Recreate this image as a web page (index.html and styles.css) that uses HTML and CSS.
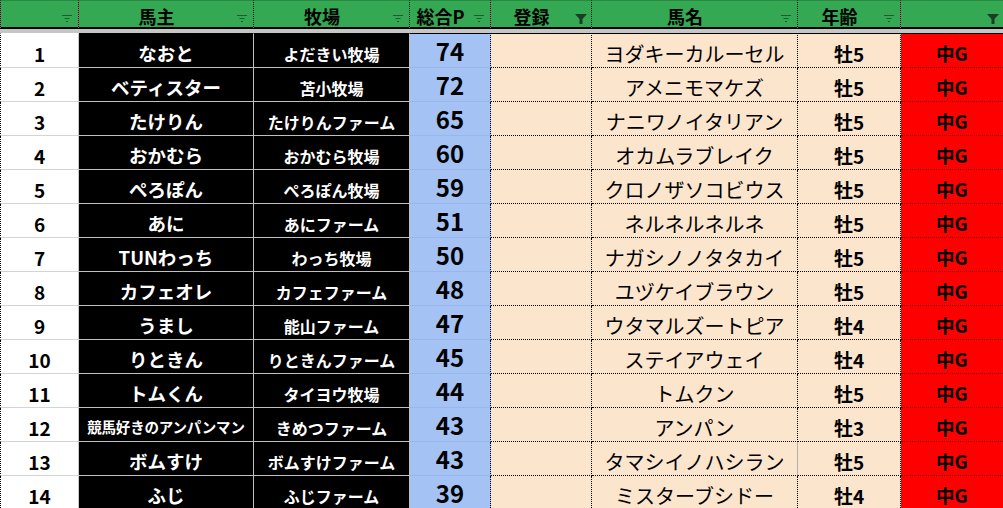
FILE: index.html
```html
<!DOCTYPE html>
<html lang="ja">
<head>
<meta charset="utf-8">
<link rel="stylesheet" href="styles.css">
</head>
<body>
<div class="sheet">
  <div class="h c0"><span class="ht"></span><svg class="fl" viewBox="0 0 10 7"><rect x="0" y="0" width="10" height="1"/><rect x="2.5" y="3" width="5" height="1"/><rect x="4" y="6" width="2" height="1"/></svg></div>
  <div class="h c1"><span class="ht">馬主</span><svg class="fl" viewBox="0 0 10 7"><rect x="0" y="0" width="10" height="1"/><rect x="2.5" y="3" width="5" height="1"/><rect x="4" y="6" width="2" height="1"/></svg></div>
  <div class="h c2"><span class="ht">牧場</span><svg class="fl" viewBox="0 0 10 7"><rect x="0" y="0" width="10" height="1"/><rect x="2.5" y="3" width="5" height="1"/><rect x="4" y="6" width="2" height="1"/></svg></div>
  <div class="h c3"><span class="ht">総合P</span><svg class="fl" viewBox="0 0 10 7"><rect x="0" y="0" width="10" height="1"/><rect x="2.5" y="3" width="5" height="1"/><rect x="4" y="6" width="2" height="1"/></svg></div>
  <div class="h c4"><span class="ht">登録</span><svg class="fn" viewBox="0 0 12 10"><polygon points="0,0 12,0 7.5,5 7.5,10 4.5,10 4.5,5"/></svg></div>
  <div class="h c5"><span class="ht">馬名</span><svg class="fl" viewBox="0 0 10 7"><rect x="0" y="0" width="10" height="1"/><rect x="2.5" y="3" width="5" height="1"/><rect x="4" y="6" width="2" height="1"/></svg></div>
  <div class="h c6"><span class="ht">年齢</span><svg class="fl" viewBox="0 0 10 7"><rect x="0" y="0" width="10" height="1"/><rect x="2.5" y="3" width="5" height="1"/><rect x="4" y="6" width="2" height="1"/></svg></div>
  <div class="h c7"><span class="ht"></span><svg class="fn" viewBox="0 0 12 10"><polygon points="0,0 12,0 7.5,5 7.5,10 4.5,10 4.5,5"/></svg></div>
  <div class="gap"></div>

  <div class="d c0 r1">1</div><div class="d c1 r1">なおと</div><div class="d c2 r1">よだきい牧場</div><div class="d c3 r1">74</div><div class="d c4 r1"></div><div class="d c5 r1">ヨダキーカルーセル</div><div class="d c6 r1">牡5</div><div class="d c7 r1">中G</div>
  <div class="d c0">2</div><div class="d c1">ベティスター</div><div class="d c2">苫小牧場</div><div class="d c3">72</div><div class="d c4"></div><div class="d c5">アメニモマケズ</div><div class="d c6">牡5</div><div class="d c7">中G</div>
  <div class="d c0">3</div><div class="d c1">たけりん</div><div class="d c2">たけりんファーム</div><div class="d c3">65</div><div class="d c4"></div><div class="d c5">ナニワノイタリアン</div><div class="d c6">牡5</div><div class="d c7">中G</div>
  <div class="d c0">4</div><div class="d c1">おかむら</div><div class="d c2">おかむら牧場</div><div class="d c3">60</div><div class="d c4"></div><div class="d c5">オカムラブレイク</div><div class="d c6">牡5</div><div class="d c7">中G</div>
  <div class="d c0">5</div><div class="d c1">ぺろぽん</div><div class="d c2">ぺろぽん牧場</div><div class="d c3">59</div><div class="d c4"></div><div class="d c5">クロノザソコビウス</div><div class="d c6">牡5</div><div class="d c7">中G</div>
  <div class="d c0">6</div><div class="d c1">あに</div><div class="d c2">あにファーム</div><div class="d c3">51</div><div class="d c4"></div><div class="d c5">ネルネルネルネ</div><div class="d c6">牡5</div><div class="d c7">中G</div>
  <div class="d c0">7</div><div class="d c1">TUNわっち</div><div class="d c2">わっち牧場</div><div class="d c3">50</div><div class="d c4"></div><div class="d c5">ナガシノノタタカイ</div><div class="d c6">牡5</div><div class="d c7">中G</div>
  <div class="d c0">8</div><div class="d c1">カフェオレ</div><div class="d c2">カフェファーム</div><div class="d c3">48</div><div class="d c4"></div><div class="d c5">ユヅケイブラウン</div><div class="d c6">牡5</div><div class="d c7">中G</div>
  <div class="d c0">9</div><div class="d c1">うまし</div><div class="d c2">能山ファーム</div><div class="d c3">47</div><div class="d c4"></div><div class="d c5">ウタマルズートピア</div><div class="d c6">牡4</div><div class="d c7">中G</div>
  <div class="d c0">10</div><div class="d c1">りときん</div><div class="d c2">りときんファーム</div><div class="d c3">45</div><div class="d c4"></div><div class="d c5">ステイアウェイ</div><div class="d c6">牡4</div><div class="d c7">中G</div>
  <div class="d c0">11</div><div class="d c1">トムくん</div><div class="d c2">タイヨウ牧場</div><div class="d c3">44</div><div class="d c4"></div><div class="d c5">トムクン</div><div class="d c6">牡5</div><div class="d c7">中G</div>
  <div class="d c0">12</div><div class="d c1 small">競馬好きのアンパンマン</div><div class="d c2">きめつファーム</div><div class="d c3">43</div><div class="d c4"></div><div class="d c5">アンパン</div><div class="d c6">牡3</div><div class="d c7">中G</div>
  <div class="d c0">13</div><div class="d c1">ボムすけ</div><div class="d c2">ボムすけファーム</div><div class="d c3">43</div><div class="d c4"></div><div class="d c5 solidr">タマシイノハシラン</div><div class="d c6">牡5</div><div class="d c7">中G</div>
  <div class="d c0">14</div><div class="d c1">ふじ</div><div class="d c2">ふじファーム</div><div class="d c3">39</div><div class="d c4"></div><div class="d c5">ミスターブシドー</div><div class="d c6">牡4</div><div class="d c7">中G</div>
</div>
</body>
</html>
```

FILE: styles.css
```css
* { box-sizing: border-box; }
html, body { margin: 0; padding: 0; }
body {
  width: 1003px;
  height: 508px;
  overflow: hidden;
  background: #fff;
  font-family: "Noto Sans CJK JP", "Noto Sans", sans-serif;
  color: #000;
}
.sheet {
  display: grid;
  grid-template-columns: 79px 175px 156px 81px 101px 206px 103px 102px;
}
.h {
  position: relative;
  height: 29px;
  background: #35a853;
  border-top: 1px solid #2a8a43;
  border-bottom: 2px solid #000;
  border-right: 1px dotted #000;
  display: flex;
  align-items: center;
  justify-content: center;
  padding: 3px 19px 0 0;
  font-weight: 700;
  font-size: 18px;
  line-height: 1;
}
.h.c0 { border-left: 1px dotted #000; }
.h.c7 { border-right: none; }
.fl, .fn {
  position: absolute;
  top: 14px;
}
.fl { right: 6px; width: 10px; height: 7px; fill: #1d5b2f; }
.fn { right: 4px; top: 13px; width: 12px; height: 10px; fill: #1b3d25; }
.gap {
  grid-column: 1 / -1;
  height: 4px;
  background: #c6c6c6;
}
.d {
  height: 34px;
  display: flex;
  align-items: center;
  justify-content: center;
  white-space: nowrap;
  padding-top: 6px;
  line-height: 1;
  font-weight: 700;
  border-bottom: 1px solid #d4d4d4;
  border-right: 1px solid #d4d4d4;
}
.d.r1 { height: 35px; border-top: 1px solid #000; }
.d.c0 {
  background: #fff;
  font-size: 19px;
  border-left: 1px dotted #000;
  border-right-color: #c8c8c8;
}
.d.c0.r1 { border-top-color: #fff; }
.d.c1, .d.c2 {
  background: #000;
  color: #fff;
  border-color: #c0c0c0;
}
.d.c1.r1, .d.c2.r1 { border-top-color: #000; }
.d.c1 { font-size: 18.5px; }
.d.c1.small { font-size: 14.5px; letter-spacing: -0.2px; }
.d.c2 { font-size: 16px; }
.d.c3 {
  background: #a4c2f4;
  font-size: 24px;
  padding-top: 0;
  border-bottom-color: #98b7ec;
  border-right: 1px dotted #000;
}
.d.c4, .d.c5, .d.c6 {
  background: #fce5cd;
  border-bottom: 1px dotted #000;
  border-right: 1px dotted #000;
}
.d.c5 { font-size: 20px; font-weight: 400; }
.d.c5.solidr { border-right: 1px solid #b0b0b0; }
.d.c6 { font-size: 19px; }
.d.c7 {
  background: #ff0000;
  font-size: 18.5px;
  border-bottom: 1px dotted #5a0000;
  border-right: none;
}
```
